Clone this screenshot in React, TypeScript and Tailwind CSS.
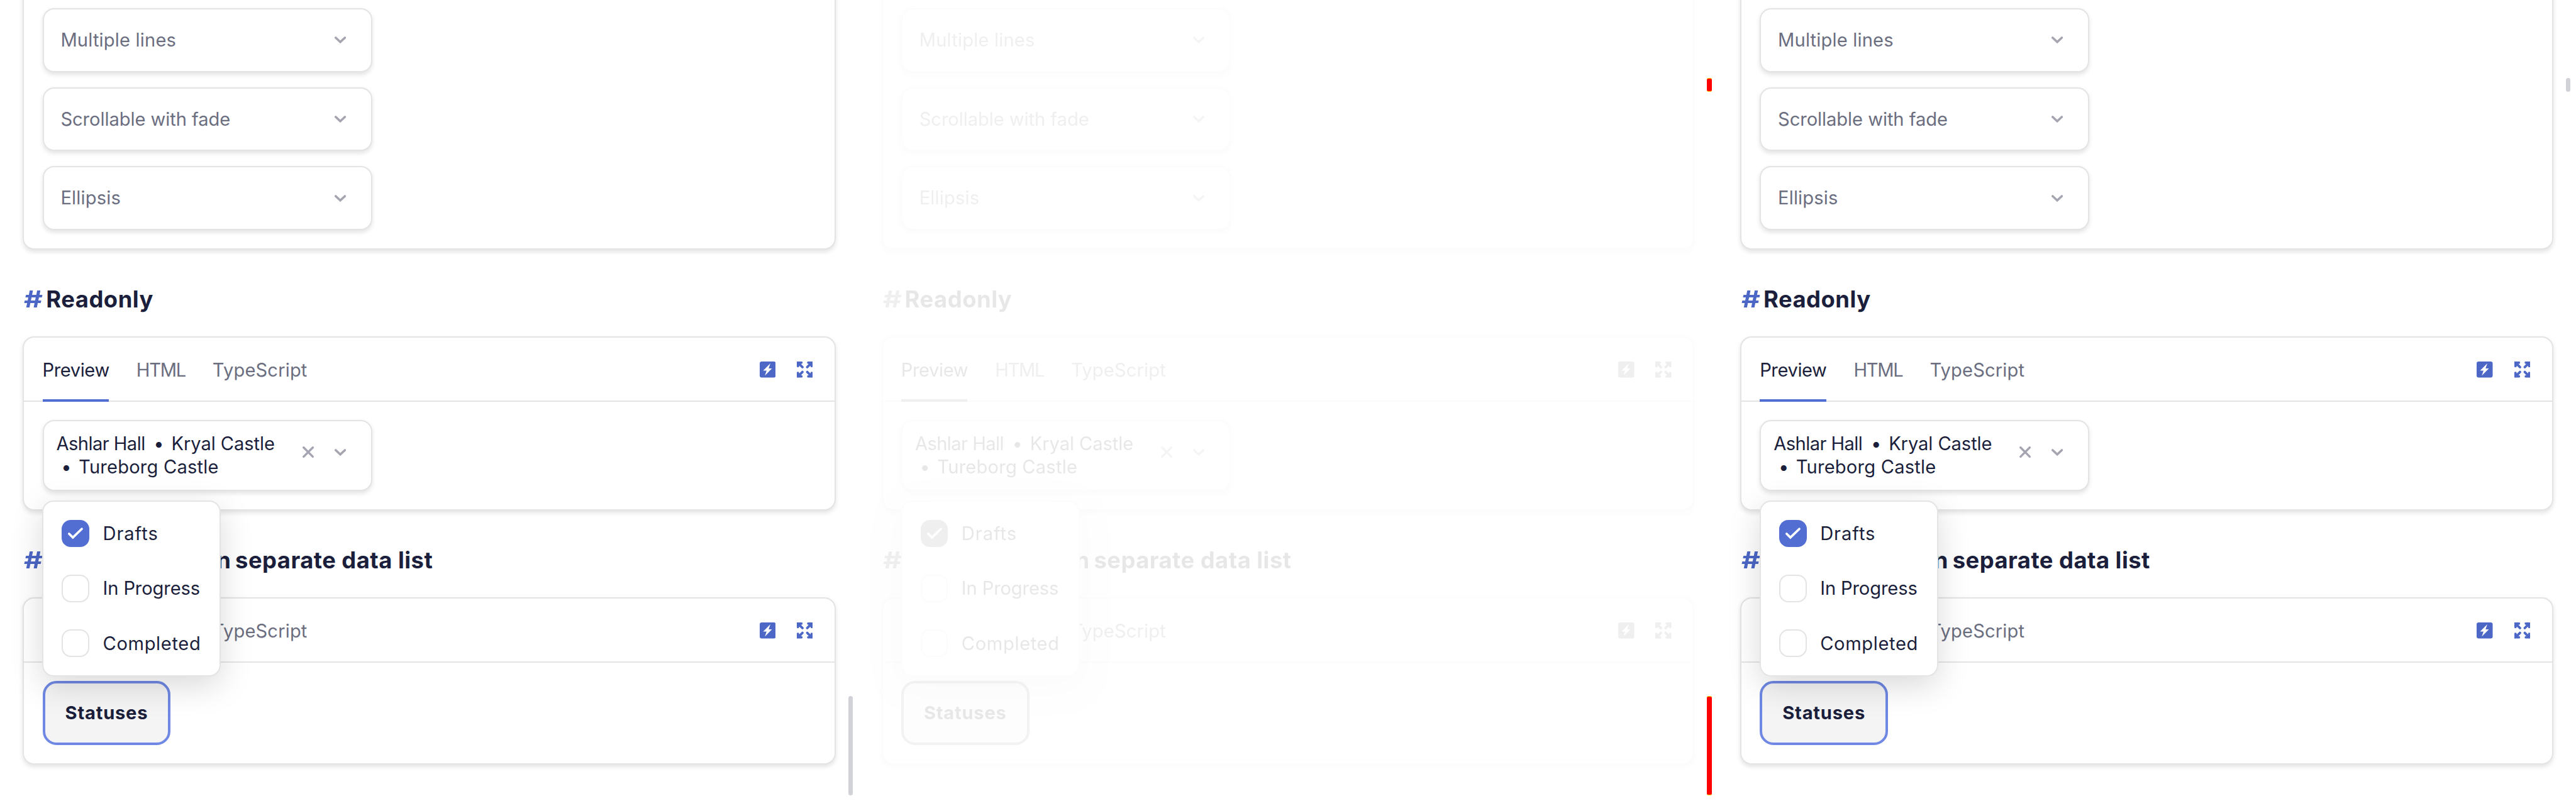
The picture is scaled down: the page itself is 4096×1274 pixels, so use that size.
import React from 'react';

function Chevron() {
  return (
    <svg className="h-[12px] w-[20px] shrink-0" viewBox="0 0 20 12" fill="none">
      <path d="M2 2.2 10 9.6 18 2.2" stroke="#a4a5b1" strokeWidth="4" strokeLinecap="round" />
    </svg>
  );
}

function Cross() {
  return (
    <svg className="h-[20px] w-[20px] shrink-0" viewBox="0 0 20 20" fill="none">
      <path d="M2 2 18 18M18 2 2 18" stroke="#a4a5b1" strokeWidth="3.8" strokeLinecap="round" />
    </svg>
  );
}

function Bolt() {
  return (
    <svg className="h-[28px] w-[28px]" viewBox="0 0 28 28">
      <rect width="28" height="28" rx="3.5" fill="#4c67c6" />
      <path d="M18.6 3.4 6 15.8h6L9 24.8 21.4 12h-5.8z" fill="#fff" />
    </svg>
  );
}

function Expand() {
  return (
    <svg className="h-[28px] w-[28px]" viewBox="0 0 28 28" fill="none" stroke="#4c67c6" strokeWidth="4.2" strokeLinecap="round">
      <path d="M2 8V2h6M2 2l7.8 7.8" />
      <path d="M20 2h6v6M26 2l-7.8 7.8" />
      <path d="M2 20v6h6M2 26l7.8-7.8" />
      <path d="M20 26h6v-6M26 26l-7.8-7.8" />
    </svg>
  );
}

const card =
  'box-border w-[1420px] rounded-[20px] border-[2.2px] border-[#e4e4e4] bg-white shadow-[0_4px_8px_rgba(0,0,0,0.11)]';

function Select({ label, tracking }: { label: string; tracking: string }) {
  return (
    <div className="flex h-[112px] w-[576px] items-center justify-between rounded-[20px] border-[2.2px] border-[#e4e4e4] bg-white pr-[44px] pl-[29.5px] shadow-[0_4px_8px_rgba(0,0,0,0.11)]">
      <span className={`pt-px text-[32px] leading-[40px] text-[#6b6e7f] ${tracking}`}>{label}</span>
      <Chevron />
    </div>
  );
}

function TabsHeader({ covered = false }: { covered?: boolean }) {
  return (
    <div className="flex h-[111.6px] items-stretch justify-between border-b-[2.2px] border-[#e4e4e4] pr-[38px] pl-[32px]">
      <div className="flex gap-[48px] text-[32px] leading-[40px] text-[#6b6e7f]">
        <div className={`relative w-[116px] pt-[37px] tracking-[-0.45px] text-[#1b1f3b] ${covered ? 'invisible' : ''}`}>
          Preview
          <span className="absolute -bottom-[2.2px] left-0 h-[4.4px] w-full bg-[#526ed3]" />
        </div>
        <div className={`w-[86px] pt-[37px] tracking-[-1.4px] ${covered ? 'invisible' : ''}`}>HTML</div>
        <div className="-ml-px pt-[37px] tracking-[0.16px]">TypeScript</div>
      </div>
      <div className="flex gap-[37px] pt-[42px]">
        <Bolt />
        <Expand />
      </div>
    </div>
  );
}

function Hash() {
  return (
    <span className="w-[40.5px] shrink-0 pl-[2px] text-[#4c67c6]">
      <span className="inline-block origin-left scale-x-[1.27]">#</span>
    </span>
  );
}

function MenuItem({ label, tracking, checked = false }: { label: string; tracking: string; checked?: boolean }) {
  return (
    <div className="flex h-[48px] items-center gap-[23.5px]">
      {checked ? (
        <span className="h-[48px] w-[48px] rounded-[16px] bg-[#526ed3]">
          <svg className="h-[48px] w-[48px]" viewBox="0 0 48 48" fill="none">
            <path d="M13 24.2l6.6 6.4L35.2 15.6" stroke="#fff" strokeWidth="4" strokeLinecap="round" />
          </svg>
        </span>
      ) : (
        <span className="h-[48px] w-[48px] rounded-[16px] border-[2.2px] border-[#e4e4e4] bg-white" />
      )}
      <span className={`pt-px leading-[40px] whitespace-nowrap ${tracking}`}>{label}</span>
    </div>
  );
}

function Page() {
  return (
    <div className="relative flex h-[1400px] w-[1500px] flex-col overflow-hidden bg-white pl-[40px]">
      <section className={`${card} -mt-[40px] h-[476px] shrink-0 pt-[52px] pl-[32px]`}>
        <div className="flex flex-col gap-[26px]">
          <Select label="Multiple lines" tracking="tracking-[0.2px]" />
          <Select label="Scrollable with fade" tracking="tracking-[-0.06px]" />
          <Select label="Ellipsis" tracking="tracking-[0.18px]" />
        </div>
      </section>

      <h2 className="mt-[64px] mb-[40px] flex text-[40px] leading-[48px] font-bold text-[#1b1f3b]">
        <Hash />
        <span className="tracking-[0.55px]">Readonly</span>
      </h2>

      <section className={`${card} h-[304px] shrink-0`}>
        <TabsHeader />
        <div className="pt-[32px] pl-[32px]">
          <div className="flex h-[124px] w-[576px] justify-between rounded-[20px] border-[2.2px] border-[#e4e4e4] bg-white pr-[44px] pl-[22px] shadow-[0_4px_8px_rgba(0,0,0,0.11)]">
            <div className="pt-[20px] text-[32px] leading-[40px] whitespace-nowrap text-[#1b1f3b]">
              <div className="flex">
                <span className="w-[155px] tracking-[-0.62px]">Ashlar Hall</span>
                <span className="w-[46px] pl-[2px] text-center">•</span>
                <span className="tracking-[-0.09px]">Kryal Castle</span>
              </div>
              <div className="flex">
                <span className="w-[39px] pr-[4px] text-center">•</span>
                <span className="tracking-[0.23px]">Tureborg Castle</span>
              </div>
            </div>
            <div className="flex h-[108px] items-center gap-[36px]">
              <Cross />
              <Chevron />
            </div>
          </div>
        </div>
      </section>

      <h2 className="mt-[64px] mb-[40px] flex text-[40px] leading-[48px] font-bold whitespace-nowrap text-[#1b1f3b]">
        <Hash />
        <span className="w-[322.5px] shrink-0 text-right">Multi select in</span>
        <span className="ml-[8px] tracking-[0.5px]">separate data list</span>
      </h2>

      <section className={`${card} h-[292px] shrink-0`}>
        <TabsHeader covered />
        <div className="pt-[32px] pl-[32px]">
          <button className="flex h-[112px] w-[224px] items-center justify-center rounded-[24px] border-[4.4px] border-[#6f88e3] bg-[#f4f4f4] text-[32px] leading-[40px] font-bold tracking-[0.86px] text-[#1b1f3b]">
            Statuses
          </button>
        </div>
      </section>

      <div className="absolute top-[874px] left-[74px] flex h-[308px] w-[312px] flex-col gap-[48px] rounded-[20px] border-[2.2px] border-[#e4e4e4] bg-white pt-[32px] pl-[32px] text-[32px] text-[#1b1f3b] shadow-[0_16px_56px_rgba(0,0,0,0.15)]">
        <MenuItem label="Drafts" tracking="tracking-[1px]" checked />
        <MenuItem label="In Progress" tracking="tracking-[-0.13px]" />
        <MenuItem label="Completed" tracking="tracking-[0.7px]" />
      </div>
    </div>
  );
}

export default function App() {
  return (
    <div className="flex h-[1399.6px] w-[4500px] overflow-hidden bg-white font-['Inter',sans-serif] [zoom:0.910222]">
      <div className="relative">
        <Page />
        <span className="absolute top-[1216px] left-[1482px] h-[174px] w-[8px] rounded-full bg-[#d1d2d8]" />
      </div>
      <div className="relative">
        <div className="opacity-10 grayscale">
          <Page />
        </div>
        <span className="absolute top-[136px] left-[1482px] h-[24px] w-[8px] rounded-[3px] border-y border-[#ffe000] bg-[#ff0000]" />
        <span className="absolute top-[1216px] left-[1482px] h-[174px] w-[8px] rounded-[3px] border-y border-[#ffe000] bg-[#ff0000]" />
      </div>
      <div className="relative">
        <Page />
        <span className="absolute top-[136px] left-[1482px] h-[24px] w-[8px] rounded-full bg-[#d1d2d8]" />
      </div>
    </div>
  );
}
